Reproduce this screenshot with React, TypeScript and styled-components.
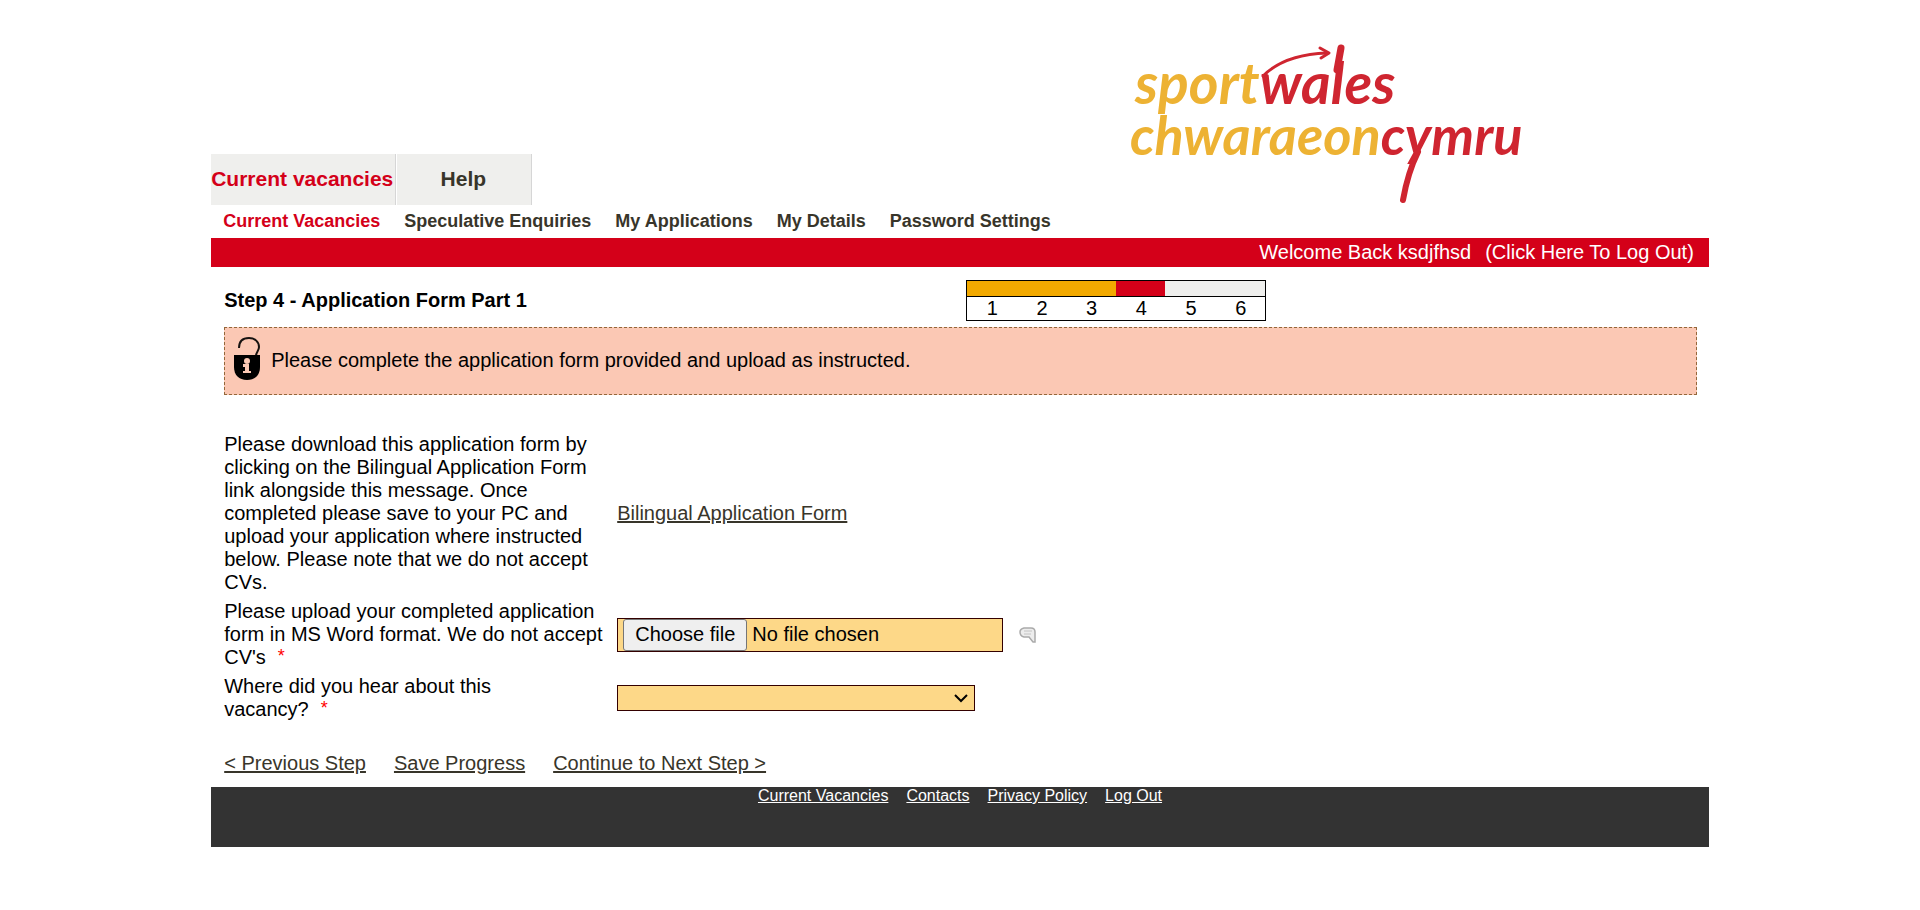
import React from 'react';
import styled, { createGlobalStyle } from 'styled-components';

const red = '#d40019';
const ink = '#38352a';

const GlobalStyle = createGlobalStyle`
  * { box-sizing: border-box; }
  body {
    margin: 0;
    background: #fff;
    color: #000;
    font: 20px/23px "Liberation Sans", Arial, sans-serif;
  }
`;

const Page = styled.div`
  width: 78%;
  margin: 0 auto;
`;

const Header = styled.header`
  display: flex;
  justify-content: space-between;
  align-items: flex-end;
  padding-top: 40px;
`;

const Tabs = styled.nav`
  display: flex;
  gap: 1px;
`;

const Tab = styled.a<{ $active?: boolean }>`
  display: flex;
  align-items: center;
  justify-content: center;
  min-width: 135px;
  height: 51px;
  padding: 0 2px 2px 0;
  background: #efefed;
  border-right: 1px solid #d6d6d6;
  color: ${(p) => (p.$active ? red : ink)};
  font-size: 21px;
  font-weight: bold;
  text-decoration: none;
`;

const Logo = styled.svg`
  display: block;
  width: 400px;
  height: 165px;
  margin-right: 12%;
  font-family: Lato, sans-serif;
  font-style: italic;
  font-weight: 700;
`;

const SubNav = styled.nav`
  display: flex;
  gap: 24px;
  padding: 5px 12px;
`;

const SubLink = styled.a<{ $active?: boolean }>`
  color: ${(p) => (p.$active ? red : ink)};
  font-size: 18px;
  font-weight: bold;
  text-decoration: none;
`;

const WelcomeBar = styled.div`
  display: flex;
  justify-content: flex-end;
  gap: 14px;
  padding: 3px 15px;
  background: ${red};
  color: #fff;
`;

const LogOut = styled.a`
  color: #fff;
  text-decoration: none;
`;

const Content = styled.main`
  padding: 13px 12px 12px 13px;
`;

const StepHeader = styled.div`
  display: grid;
  grid-template-columns: 1fr 1fr;
  column-gap: 10px;
  align-items: center;
`;

const Title = styled.h1`
  margin: 0;
  padding-bottom: 1px;
  font-size: 20px;
  font-weight: bold;
`;

const Steps = styled.ol`
  display: flex;
  width: 300px;
  margin: 0;
  padding: 0;
  list-style: none;
  border: 1px solid #000;
`;

const Step = styled.li<{ $color: string }>`
  flex: 1;
  padding-left: 2px;
  text-align: center;
  &::before {
    content: "";
    display: block;
    height: 15px;
    margin-left: -2px;
    background: ${(p) => p.$color};
    border-bottom: 1px solid #000;
  }
`;

const Notice = styled.div`
  display: flex;
  gap: 10px;
  margin-top: 6px;
  padding: 9px;
  min-height: 68px;
  background: #fbc8b4;
  border: 1px dashed #94673a;
`;

const NoticeText = styled.p`
  margin: 0;
  padding-top: 12px;
`;

const Form = styled.form`
  margin-top: 35px;
`;

const Table = styled.table`
  width: 100%;
  border-collapse: collapse;
`;

const LabelCell = styled.th`
  width: 393px;
  padding: 3px 13px 3px 0;
  font-weight: normal;
  text-align: left;
`;

const FieldCell = styled.td`
  padding: 3px 0;
  vertical-align: middle;
`;

const FieldRow = styled.div`
  display: flex;
  align-items: center;
  gap: 16px;
`;

const TextLink = styled.a`
  color: ${ink};
  text-decoration: underline;
`;

const Required = styled.span`
  margin-left: 12px;
  color: #f00;
  font-size: 18px;
  line-height: 18px;
  vertical-align: 2px;
`;

const FileBox = styled.span`
  position: relative;
  display: flex;
  align-items: center;
  gap: 5px;
  width: 386px;
  height: 34px;
  padding-left: 5px;
  background: #fdd888;
  border: 1px solid #300;
`;

const FileInput = styled.input`
  position: absolute;
  inset: 0;
  width: 100%;
  opacity: 0;
`;

const FileButton = styled.span`
  height: 32px;
  padding: 3px 11px;
  background: #efefef;
  border: 1px solid #767676;
  border-radius: 3px;
`;

const SelectBox = styled.div`
  position: relative;
  width: 358px;
`;

const Select = styled.select`
  display: block;
  appearance: none;
  width: 100%;
  height: 26px;
  background-color: #fdd888;
  border: 1px solid #300;
  border-radius: 0;
  color: #000;
  font: 20px "Liberation Sans", Arial, sans-serif;
`;

const Chevron = styled.svg`
  position: absolute;
  top: 9px;
  right: 7px;
  pointer-events: none;
`;

const Actions = styled.div`
  display: flex;
  gap: 28px;
  margin-top: 28px;
`;

const ActionButton = styled.button`
  padding: 0;
  border: 0;
  background: none;
  color: ${ink};
  font: inherit;
  text-decoration: underline;
`;

const Footer = styled.footer`
  display: flex;
  justify-content: center;
  gap: 18px;
  height: 60px;
  background: #333;
  font-size: 16px;
  line-height: 18px;
`;

const FooterLink = styled.a`
  color: #fff;
`;

const SportWalesLogo = () => (
  <Logo viewBox="0 0 400 165" role="img" aria-label="Sport Wales, Chwaraeon Cymru">
    <text x="6" y="64" fontSize="57" fill="#edb233">
      sport<tspan fill="#cf2530">wales</tspan>
    </text>
    <text x="1" y="115" fontSize="54" fill="#edb233">
      chwaraeon<tspan fill="#cf2530">cymru</tspan>
    </text>
    <g fill="none" stroke="#cf2530" strokeLinecap="round" strokeLinejoin="round">
      <path d="M134 36C147 23 168 14 198 13" strokeWidth="3" />
      <path d="M191 8L200 13L192 18" strokeWidth="3" />
      <path d="M289 112C282 126 277 143 274 160" strokeWidth="6" />
      <path d="M212 8L208 30" strokeWidth="7" />
    </g>
  </Logo>
);

const PadlockIcon = () => (
  <svg width="27" height="44" viewBox="0 0 27 44" aria-hidden="true">
    <path d="M5 11C5 4 9 1 15 1C21 1 25 5 25 10C25 14 22 15 22 19" fill="none" stroke="#161210" strokeWidth="2" />
    <path d="M0 18H26V30C26 38 21 43 13 43C5 43 0 38 0 30Z" fill="#000" />
    <circle cx="13" cy="24" r="3" fill="#fbc8b4" />
    <path d="M9 27H15V34H17V36H9V34H11V30H9Z" fill="#fbc8b4" />
  </svg>
);

const BubbleIcon = () => (
  <svg width="18" height="16" viewBox="0 0 18 16" role="img" aria-label="Help">
    <path d="M5 1H12Q16 1 16 5V15H14L10 10H5Q1 9 1 5Q1 2 5 1Z" fill="#ededed" stroke="#aaa" strokeWidth="1.5" />
    <path d="M5 4H13M5 7H12" stroke="#c4c4c4" />
  </svg>
);

const steps = ['#f2a900', '#f2a900', '#f2a900', red, '#efefed', '#efefed'];

export default function App() {
  return (
    <>
      <GlobalStyle />
      <Page>
        <Header>
          <Tabs aria-label="Main">
            <Tab href="#vacancies" $active>Current vacancies</Tab>
            <Tab href="#help">Help</Tab>
          </Tabs>
          <SportWalesLogo />
        </Header>
        <SubNav aria-label="Section">
          <SubLink href="#current" $active>Current Vacancies</SubLink>
          <SubLink href="#speculative">Speculative Enquiries</SubLink>
          <SubLink href="#applications">My Applications</SubLink>
          <SubLink href="#details">My Details</SubLink>
          <SubLink href="#password">Password Settings</SubLink>
        </SubNav>
        <WelcomeBar>
          <span>Welcome Back ksdjfhsd</span>
          <LogOut href="#logout">(Click Here To Log Out)</LogOut>
        </WelcomeBar>
        <Content>
          <StepHeader>
            <Title>Step 4 - Application Form Part 1</Title>
            <Steps>
              {steps.map((color, i) => (
                <Step key={i} $color={color}>{i + 1}</Step>
              ))}
            </Steps>
          </StepHeader>
          <Notice>
            <PadlockIcon />
            <NoticeText>Please complete the application form provided and upload as instructed.</NoticeText>
          </Notice>
          <Form onSubmit={(e) => e.preventDefault()}>
            <Table>
              <tbody>
                <tr>
                  <LabelCell scope="row">
                    Please download this application form by clicking on the Bilingual Application Form link
                    alongside this message. Once completed please save to your PC and upload your application
                    where instructed below. Please note that we do not accept CVs.
                  </LabelCell>
                  <FieldCell>
                    <TextLink href="#form">Bilingual Application Form</TextLink>
                  </FieldCell>
                </tr>
                <tr>
                  <LabelCell scope="row">
                    <label htmlFor="upload">
                      Please upload your completed application form in MS Word format. We do not accept
                      CV's<Required>*</Required>
                    </label>
                  </LabelCell>
                  <FieldCell>
                    <FieldRow>
                      <FileBox>
                        <FileButton>Choose file</FileButton>
                        <span>No file chosen</span>
                        <FileInput id="upload" type="file" />
                      </FileBox>
                      <BubbleIcon />
                    </FieldRow>
                  </FieldCell>
                </tr>
                <tr>
                  <LabelCell scope="row">
                    <label htmlFor="source">
                      Where did you hear about this<br />vacancy?<Required>*</Required>
                    </label>
                  </LabelCell>
                  <FieldCell>
                    <SelectBox>
                      <Select id="source" defaultValue="">
                        <option value="" />
                      </Select>
                      <Chevron width="14" height="9" viewBox="0 0 14 9" aria-hidden="true">
                        <path d="M1 1L7 7L13 1" fill="none" stroke="#000" strokeWidth="2" />
                      </Chevron>
                    </SelectBox>
                  </FieldCell>
                </tr>
              </tbody>
            </Table>
            <Actions>
              <ActionButton type="button">&lt; Previous Step</ActionButton>
              <ActionButton type="button">Save Progress</ActionButton>
              <ActionButton type="submit">Continue to Next Step &gt;</ActionButton>
            </Actions>
          </Form>
        </Content>
        <Footer>
          <FooterLink href="#current">Current Vacancies</FooterLink>
          <FooterLink href="#contacts">Contacts</FooterLink>
          <FooterLink href="#privacy">Privacy Policy</FooterLink>
          <FooterLink href="#logout">Log Out</FooterLink>
        </Footer>
      </Page>
    </>
  );
}
